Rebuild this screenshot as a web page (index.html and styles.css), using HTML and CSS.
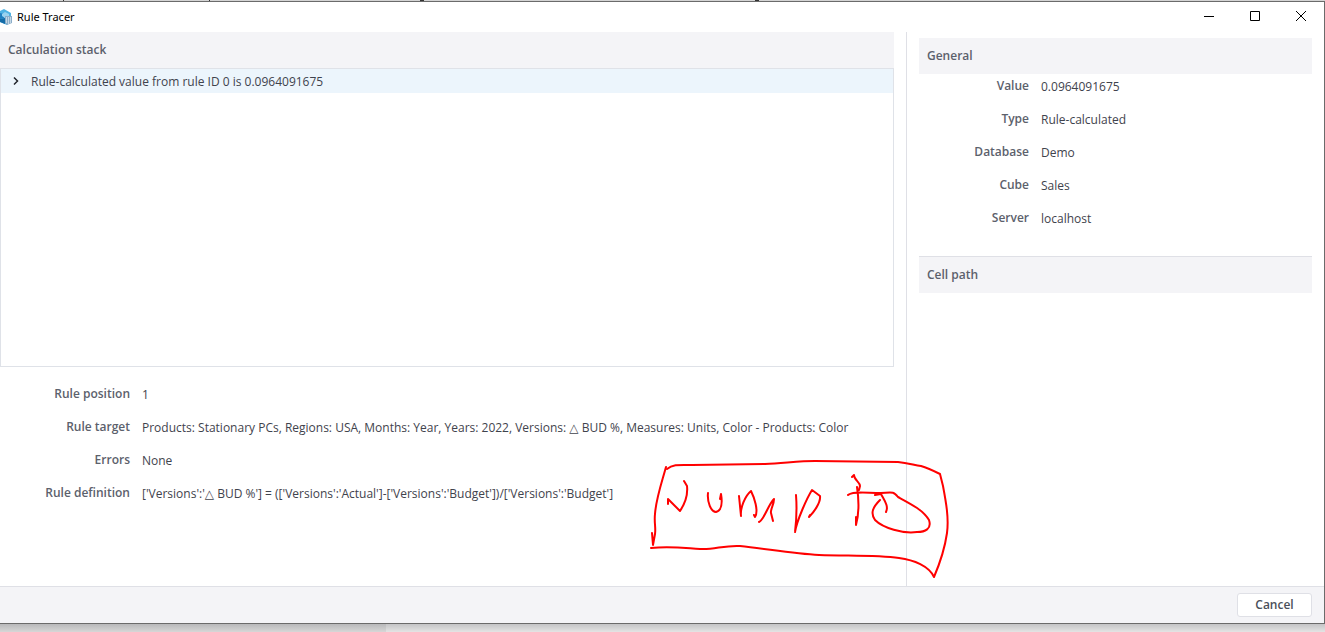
FILE: index.html
```
<!DOCTYPE html>
<html lang="en">

<head>
  <meta charset="UTF-8" />
  <meta name="viewport" content="width=device-width, initial-scale=1.0" />
  <title>Rule Tracer</title>
  <link rel="stylesheet" href="styles.css">
</head>

<body>
  <div class="window">
    <header class="titlebar">
      <svg class="logo" width="12" height="16" viewBox="0 0 12 16" aria-hidden="true">
        <path d="M0 2 4 0l7 4v8l-4 4-7-3z" fill="#4fb3e4" />
        <path d="M0 4l4 1v4l-4 1z" fill="#1f7fc0" />
        <path d="M0 10l5-1v6l-5-2z" fill="#156ca8" />
        <path d="M2 5l3-2 4 2v3l-4 1-3-2z" fill="#9ad3f0" />
        <path d="M5 7h7v7l-5 2-2-2z" fill="#8badc9" />
        <path d="M6.500 8v6M8.500 8v7M10.500 8v6" stroke="#c3d7e6" stroke-width="1" />
      </svg>
      <h1>Rule Tracer</h1>
      <div class="window-controls">
        <button type="button" aria-label="Minimize">
          <svg width="12" height="12" viewBox="0 0 12 12"><path d="M1 6.500h10" /></svg>
        </button>
        <button type="button" aria-label="Maximize">
          <svg width="12" height="12" viewBox="0 0 12 12"><path d="M1.500 1.500h9v9h-9z" /></svg>
        </button>
        <button type="button" aria-label="Close">
          <svg width="12" height="12" viewBox="0 0 12 12"><path d="M1 1l10 10M11 1 1 11" /></svg>
        </button>
      </div>
    </header>

    <main class="content">
      <section class="stack-pane">
        <h2 class="section-title">Calculation stack</h2>
        <ul class="tree">
          <li>
            <button type="button" class="tree-row">
              <svg width="8" height="10" viewBox="0 0 8 10" aria-hidden="true"><path d="M2 1.500 5.500 5 2 8.500" /></svg>
              <span>Rule-calculated value from rule ID 0 is 0.0964091675</span>
            </button>
          </li>
        </ul>
        <dl class="fields rule-fields">
          <dt>Rule position</dt>
          <dd>1</dd>
          <dt>Rule target</dt>
          <dd>Products: Stationary PCs, Regions: USA, Months: Year, Years: 2022, Versions: <span class="delta">△</span> BUD %, Measures: Units, Color - Products: Color</dd>
          <dt>Errors</dt>
          <dd>None</dd>
          <dt>Rule definition</dt>
          <dd>['Versions':'<span class="delta">△</span> BUD %'] = (['Versions':'Actual']-['Versions':'Budget'])/['Versions':'Budget']</dd>
        </dl>
      </section>

      <aside class="info-pane">
        <h2 class="section-title">General</h2>
        <dl class="fields general-fields">
          <dt>Value</dt>
          <dd>0.0964091675</dd>
          <dt>Type</dt>
          <dd>Rule-calculated</dd>
          <dt>Database</dt>
          <dd>Demo</dd>
          <dt>Cube</dt>
          <dd>Sales</dd>
          <dt>Server</dt>
          <dd>localhost</dd>
        </dl>
        <h2 class="section-title cell-path">Cell path</h2>
      </aside>
    </main>

    <footer class="actions">
      <button type="button" class="cancel">Cancel</button>
    </footer>
  </div>

  <!-- freehand pen note -->
  <svg class="pen-note" width="300" height="122" viewBox="650 459 300 122" role="img" aria-label="Jump to">
    <path d="M666 467C661 485 656 499 655 514C654 522 656 528 655 534L653 545L652 533" />
    <path d="M667 469C673 464 680 465 692 465L765 464C785 463 800 461 815 461L898 462C908 463 914 465 921 466C928 468 934 471 940 474L943 486C946 502 949 518 947 533C945 547 940 563 934 577C929 566 914 560 899 558C878 555 850 556 819 555C794 554 768 549 740 546C724 545 714 550 700 549C684 548 670 546 651 548" />
    <path d="M668 504L668 499L680 511C684 505 688 495 687 486L684 481" />
    <path d="M708 493C707 502 711 512 716 512C720 511 723 506 721 494L720 499" />
    <path d="M739 496L741 516C740 508 745 496 751 491C754 497 759 511 755 517L754 515" />
    <path d="M759 522C764 520 768 505 774 499C774 505 770 510 771 513L773 521" />
    <path d="M796 495C797 508 796 524 795 532C797 520 807 498 812 490L820 496C821 503 813 513 809 517L810 515" />
    <path d="M852 477L854 475C854 480 860 482 860 486L859 490M857 487C859 500 859 514 856 525L856 517" />
    <path d="M848 495C852 491 866 493 881 493C894 492 894 492 898 497C911 504 923 510 929 520C932 529 925 532 917 532C903 534 883 528 875 520C870 513 873 507 880 500" />
    <path d="M875 495L881 494C884 500 889 506 886 512" />
  </svg>
</body>

</html>
```
FILE: styles.css
```
* {
  box-sizing: border-box;
}

body {
  display: flex;
  flex-direction: column;
  height: 100vh;
  margin: 0;
  padding: 1px 0 8px;
  /* shadow under the window, then the desktop */
  background:
    linear-gradient(to right, rgba(0, 0, 0, 0.06) 386px, transparent 386px) bottom / 100% 8px no-repeat,
    linear-gradient(#c4c4c6, #e4e4e4) bottom / 100% 8px no-repeat,
    linear-gradient(#333, #333) 63px 0 / 1px 1px no-repeat,
    linear-gradient(#333, #333) 209px 0 / 1px 1px no-repeat,
    linear-gradient(#333, #333) 420px 0 / 4px 1px no-repeat,
    linear-gradient(#333, #333) 755px 0 / 4px 1px no-repeat,
    #d4d4d4;
  color: #3f434d;
  font: 12px/18px "Open Sans", "Noto Sans", sans-serif;
}

h1,
h2,
dl,
dd,
ul {
  margin: 0;
  padding: 0;
}

button {
  border: none;
  background: none;
  color: inherit;
  font: inherit;
  cursor: pointer;
}

.window {
  display: flex;
  flex: 1;
  flex-direction: column;
  border: 1px solid #6b6b6b;
  border-left: none;
  background: #fff;
}

.titlebar {
  display: flex;
  align-items: center;
  height: 30px;
}

.titlebar h1 {
  flex: 1;
  margin-left: 5px;
  color: #000;
  font-size: 11px;
  font-weight: 400;
  font-family: "Noto Sans", sans-serif;
}

.window-controls {
  display: flex;
}

.window-controls button {
  width: 46px;
  height: 30px;
  padding: 0 0 2px;
}

.window-controls svg {
  display: block;
  margin: 0 auto;
  fill: none;
  stroke: #000;
}

.content {
  display: grid;
  flex: 1;
  grid-template-columns: 1fr 417px;
}

.stack-pane {
  padding-right: 12px;
  border-right: 1px solid #dfe0e6;
}

.section-title {
  padding: 9px 8px;
  background: #f4f4f7;
  color: #5c616c;
  font-size: 12px;
  font-weight: 600;
}

.tree {
  height: 299px;
  border: 1px solid #dfe2e8;
  list-style: none;
}

.tree-row {
  display: flex;
  gap: 11px;
  align-items: center;
  width: 100%;
  height: 24px;
  padding: 0 11px;
  background: #ecf5fc;
  text-align: left;
}

.tree-row svg {
  fill: none;
  stroke: #22252c;
  stroke-width: 1.5;
}

.tree-row span {
  padding-top: 2px;
}

.fields {
  display: grid;
  grid-auto-rows: 18px;
  row-gap: 15px;
  column-gap: 12px;
}

.fields dt {
  color: #5c616c;
  font-weight: 600;
  text-align: right;
}

.fields dd {
  padding-top: 1px;
  line-height: 17px;
}

.rule-fields {
  grid-template-columns: 130px 1fr;
  padding-top: 18px;
}

.delta {
  font-family: "DejaVu Sans", sans-serif;
  line-height: 1;
}

.info-pane {
  padding: 6px 12px 0;
}

.general-fields {
  grid-template-columns: 110px 1fr;
  padding: 3px 0 29px;
}

.cell-path {
  border-top: 1px solid #dfe0e6;
}

.actions {
  display: flex;
  justify-content: flex-end;
  padding: 6px 12px;
  border-top: 1px solid #dfe0e6;
  background: #f4f4f7;
}

.cancel {
  width: 75px;
  height: 24px;
  padding: 0;
  border: 1px solid #dfe0e6;
  border-radius: 3px;
  background: #fff;
  color: #4a4f5a;
  font-weight: 600;
}

.pen-note {
  position: absolute;
  top: 459px;
  left: 650px;
  fill: none;
  stroke: #f00;
  stroke-width: 2;
  stroke-linecap: round;
  stroke-linejoin: round;
  pointer-events: none;
}
```
